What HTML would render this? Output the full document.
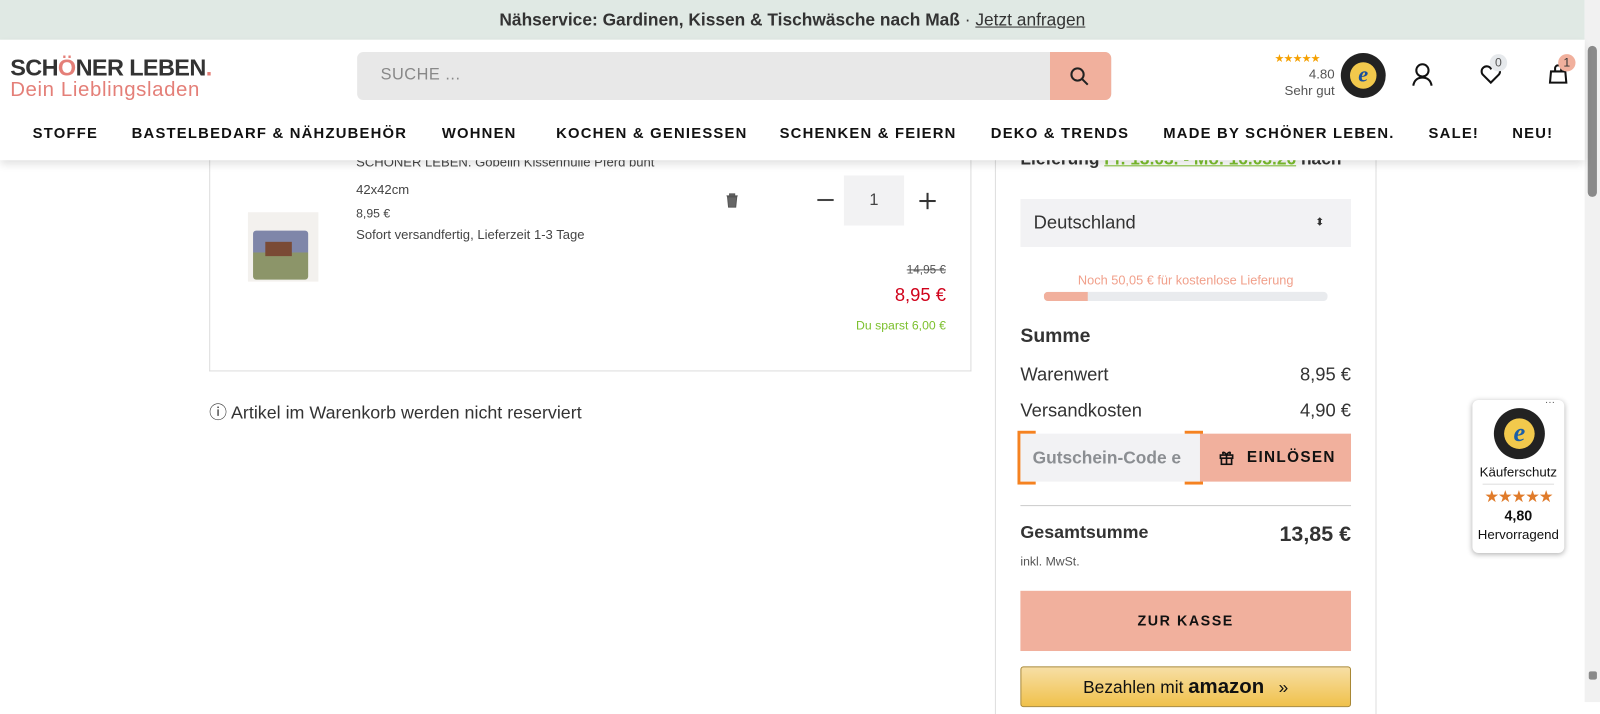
<!DOCTYPE html>
<html><head><meta charset="utf-8"><style>
*{box-sizing:border-box;margin:0;padding:0}
body{width:1600px;height:688px;overflow:hidden;background:#fff;font-family:"Liberation Sans",sans-serif;color:#333;position:relative}
#w{position:absolute;left:0;top:0;width:1568px;height:674px;transform:scale(1.0204);transform-origin:0 0}
.abs{position:absolute}
.banner{left:0;top:0;width:1553px;height:39px;background:#e0e9e4;text-align:center;font-size:17px;line-height:39px;color:#333;font-weight:bold}
.banner a{font-weight:normal;color:#333;text-decoration:underline}
.header{left:0;top:39px;width:1553px;height:118px;background:#fff;box-shadow:0 4px 8px rgba(0,0,0,.12);z-index:2}
.nav{position:absolute;top:84px;left:0;width:1553px;font-size:14.5px;font-weight:bold;letter-spacing:1.2px;color:#111}
.nav span{position:absolute}
.scroll{left:1553px;top:0;width:15px;height:688px;background:#f1f1f1}
.thumb{left:1556px;top:45px;width:9px;height:148px;background:#8a8a8a;border-radius:5px}
.sm{font-size:12.8px;color:#444}
</style></head><body><div id="w">
<div class="abs banner">Nähservice: Gardinen, Kissen &amp; Tischwäsche nach Maß <span style="font-weight:normal">·</span> <a>Jetzt anfragen</a></div>
<div class="abs header">
 <div class="abs" style="left:10px;top:14px;font-size:23px;font-weight:bold;color:#333;letter-spacing:-0.6px">SCH<span style="color:#e47f78">Ö</span>NER LEBEN<span style="color:#e47f78">.</span></div>
 <div class="abs" style="left:10px;top:38px;font-size:20px;color:#e47f78;letter-spacing:0.6px">Dein Lieblingsladen</div>
 <div class="abs" style="left:350px;top:12px;width:739px;height:47px;background:#e8e8e8;border-radius:6px"></div>
 <div class="abs" style="left:373px;top:26px;font-size:16px;color:#888;letter-spacing:.5px">SUCHE ...</div>
 <div class="abs" style="left:1029px;top:12px;width:60px;height:47px;background:#f1b09d;border-radius:0 6px 6px 0"></div>
 <svg class="abs" style="left:1048px;top:26px" width="20" height="20" viewBox="0 0 20 20"><circle cx="8" cy="8" r="6" fill="none" stroke="#222" stroke-width="2"/><path d="M12.5 12.5L18 18" stroke="#222" stroke-width="2"/></svg>
 <div class="abs" style="left:1249px;top:12px;font-size:11px;color:#f5a000;letter-spacing:-1px">★★★★★</div>
 <div class="abs" style="left:1250px;top:26px;width:58px;text-align:right;font-size:13px;color:#555;line-height:16px">4.80<br>Sehr gut</div>
 <div class="abs" style="left:1314px;top:13px;width:44px;height:44px;border-radius:50%;background:#222;"></div>
 <div class="abs" style="left:1323px;top:22px;width:26px;height:26px;border-radius:50%;background:#f2c94c;color:#1a4f9c;font:italic bold 22px/24px 'Liberation Serif',serif;text-align:center">e</div>
 <svg class="abs" style="left:1383px;top:22px" width="22" height="24" viewBox="0 0 22 24"><circle cx="11" cy="8" r="6" fill="none" stroke="#111" stroke-width="2"/><path d="M2 23c1-6 5-8 9-8s8 2 9 8" fill="none" stroke="#111" stroke-width="2"/></svg>
 <svg class="abs" style="left:1450px;top:24px" width="22" height="20" viewBox="0 0 22 20"><path d="M11 18L3 10a5 5 0 0 1 8-6 5 5 0 0 1 8 6z" fill="none" stroke="#111" stroke-width="2"/></svg>
 <div class="abs" style="left:1460px;top:14px;width:17px;height:17px;border-radius:50%;background:#e6e9ec;font-size:12px;text-align:center;line-height:17px;color:#555">0</div>
 <svg class="abs" style="left:1517px;top:24px" width="20" height="20" viewBox="0 0 20 20"><path d="M3 7h14l1 11H2z M7 7V4a3 3 0 0 1 6 0v3" fill="none" stroke="#111" stroke-width="2"/></svg>
 <div class="abs" style="left:1527px;top:14px;width:17px;height:17px;border-radius:50%;background:#f1b09d;font-size:12px;text-align:center;line-height:17px;color:#333">1</div>
 <div class="nav"><span style="left:32px">STOFFE</span><span style="left:129px">BASTELBEDARF &amp; NÄHZUBEHÖR</span><span style="left:433px">WOHNEN</span><span style="left:545px">KOCHEN &amp; GENIESSEN</span><span style="left:764px">SCHENKEN &amp; FEIERN</span><span style="left:971px">DEKO &amp; TRENDS</span><span style="left:1140px">MADE BY SCHÖNER LEBEN.</span><span style="left:1400px">SALE!</span><span style="left:1482px">NEU!</span></div>
</div>
<div class="abs" style="left:205px;top:140px;width:747px;height:224px;border:1px solid #ddd;border-top:none"></div>
<div class="abs sm" style="left:349px;top:151px">SCHÖNER LEBEN. Gobelin Kissenhülle Pferd bunt</div>
<div class="abs sm" style="left:349px;top:178px">42x42cm</div>
<div class="abs" style="left:349px;top:202px;font-size:12px;color:#444">8,95 €</div>
<div class="abs sm" style="left:349px;top:222px">Sofort versandfertig, Lieferzeit 1-3 Tage</div>
<div class="abs" style="left:243px;top:208px;width:69px;height:68px;background:#f3f1ee"></div>
<div class="abs" style="left:248px;top:226px;width:54px;height:48px;background:linear-gradient(#7f86a9 0 45%,#8c9569 45%);border-radius:3px"></div>
<div class="abs" style="left:260px;top:237px;width:26px;height:14px;background:#7a4a35"></div>
<svg class="abs" style="left:711px;top:189px" width="13" height="15" viewBox="0 0 13 15"><path d="M1 3h11M4 3V1h5v2M2 4h9l-1 10H3z" fill="#666" stroke="#555"/></svg>
<div class="abs" style="left:801px;top:195px;width:16px;height:2px;background:#444"></div>
<div class="abs" style="left:827px;top:172px;width:59px;height:49px;background:#f2f2f3;text-align:center;line-height:49px;font-size:16px;color:#444">1</div>
<div class="abs" style="left:901px;top:196px;width:16px;height:2px;background:#333"></div>
<div class="abs" style="left:908px;top:189px;width:2px;height:16px;background:#333"></div>
<div class="abs" style="left:870px;top:259px;width:57px;text-align:right;font-size:11.5px;color:#555;text-decoration:line-through">14,95 €</div>
<div class="abs" style="left:850px;top:279px;width:77px;text-align:right;font-size:18px;color:#d0021b">8,95 €</div>
<div class="abs" style="left:790px;top:312px;width:137px;text-align:right;font-size:12px;color:#7cc02e">Du sparst 6,00 €</div>
<div class="abs" style="left:205px;top:391px;font-size:17.5px;color:#333">ⓘ Artikel im Warenkorb werden nicht reserviert</div>
<div class="abs" style="left:975px;top:140px;width:374px;height:560px;border-left:1px solid #ddd;border-right:1px solid #ddd"></div>
<div class="abs" style="left:1000px;top:146px;font-size:17px;font-weight:bold;color:#333">Lieferung <span style="color:#7cc02e;text-decoration:underline">Fr. 13.03. - Mo. 16.03.26</span> nach</div>
<div class="abs" style="left:1000px;top:195px;width:324px;height:47px;background:#f2f2f4;font-size:18px;line-height:47px;padding-left:13px;color:#333">Deutschland<span style="position:absolute;right:26px;font-size:11px">⬍</span></div>
<div class="abs" style="left:1000px;top:268px;width:324px;text-align:center;font-size:12.5px;color:#f1a08b">Noch 50,05 € für kostenlose Lieferung</div>
<div class="abs" style="left:1023px;top:286px;width:278px;height:9px;background:#e9ebee;border-radius:4px;overflow:hidden"><div style="width:43px;height:9px;background:#f1b09d"></div></div>
<div class="abs" style="left:1000px;top:319px;font-size:19px;font-weight:bold;color:#333">Summe</div>
<div class="abs" style="left:1000px;top:357px;font-size:18px;color:#333">Warenwert</div>
<div class="abs" style="left:1200px;top:357px;width:124px;text-align:right;font-size:18px;color:#333">8,95 €</div>
<div class="abs" style="left:1000px;top:392px;font-size:18px;color:#333">Versandkosten</div>
<div class="abs" style="left:1200px;top:392px;width:124px;text-align:right;font-size:18px;color:#333">4,90 €</div>
<div class="abs" style="left:1000px;top:425px;width:176px;height:47px;background:#f2f2f4;font-size:17px;font-weight:bold;color:#8b8e92;line-height:47px;padding-left:12px;white-space:nowrap;overflow:hidden">Gutschein-Code e</div>
<div class="abs" style="left:997px;top:422px;width:182px;height:53px;border:3px solid #f58220;clip-path:polygon(0 0,18px 0,18px 18px,164px 18px,164px 0,100% 0,100% 100%,164px 100%,164px 35px,18px 35px,18px 100%,0 100%)"></div>
<div class="abs" style="left:1176px;top:425px;width:148px;height:47px;background:#f1b09d;font-size:15px;font-weight:bold;letter-spacing:1.3px;line-height:47px;color:#111;padding-left:46px">EINLÖSEN</div>
<svg class="abs" style="left:1194px;top:440px" width="16" height="16" viewBox="0 0 16 16"><path d="M2 6h12v3H2zM3 9h10v6H3zM8 6v9M8 6C6 2 3 3 5 5M8 6c2-4 5-3 3-1" fill="none" stroke="#111" stroke-width="1.6"/></svg>
<div class="abs" style="left:1000px;top:495px;width:324px;height:1px;background:#ccc"></div>
<div class="abs" style="left:1000px;top:511px;font-size:17.5px;font-weight:bold;color:#333">Gesamtsumme</div>
<div class="abs" style="left:1180px;top:512px;width:144px;text-align:right;font-size:21px;font-weight:bold;color:#333">13,85 €</div>
<div class="abs" style="left:1000px;top:543px;font-size:12px;color:#555">inkl. MwSt.</div>
<div class="abs" style="left:1000px;top:579px;width:324px;height:59px;background:#f1b09d;text-align:center;line-height:59px;font-size:14px;font-weight:bold;letter-spacing:1.5px;color:#111">ZUR KASSE</div>
<div class="abs" style="left:1000px;top:653px;width:324px;height:40px;background:linear-gradient(#f7dfa5,#f0c14b);border:1px solid #a88734;border-radius:3px;text-align:center;font-size:17px;padding-top:8px;color:#111">Bezahlen mit <b style="font-size:20px">amazon</b> &nbsp;&nbsp;»</div>
<div class="abs" style="left:1443px;top:392px;width:90px;height:150px;background:#fff;border-radius:6px;box-shadow:0 1px 5px rgba(0,0,0,.3)"></div>
<div class="abs" style="left:1514px;top:389px;font-size:10px;color:#555">···</div>
<div class="abs" style="left:1464px;top:400px;width:50px;height:50px;border-radius:50%;background:#222"></div>
<div class="abs" style="left:1474px;top:410px;width:30px;height:30px;border-radius:50%;background:#f2c94c;color:#1a5ea8;font:italic bold 26px/28px 'Liberation Serif',serif;text-align:center">e</div>
<div class="abs" style="left:1443px;top:455px;width:90px;text-align:center;font-size:13px;color:#111">Käuferschutz</div>
<div class="abs" style="left:1453px;top:474px;width:70px;height:1px;background:#ddd"></div>
<div class="abs" style="left:1443px;top:477px;width:90px;text-align:center;font-size:16px;color:#e07b2a;letter-spacing:-1px">★★★★★</div>
<div class="abs" style="left:1443px;top:497px;width:90px;text-align:center;font-size:14px;font-weight:bold;color:#111">4,80</div>
<div class="abs" style="left:1443px;top:516px;width:90px;text-align:center;font-size:13px;color:#111">Hervorragend</div>
<div class="abs scroll"></div><div class="abs thumb"></div>
<div class="abs" style="left:1557px;top:658px;width:8px;height:8px;background:#8a8a8a;border-radius:2px"></div>
</div></body></html>
